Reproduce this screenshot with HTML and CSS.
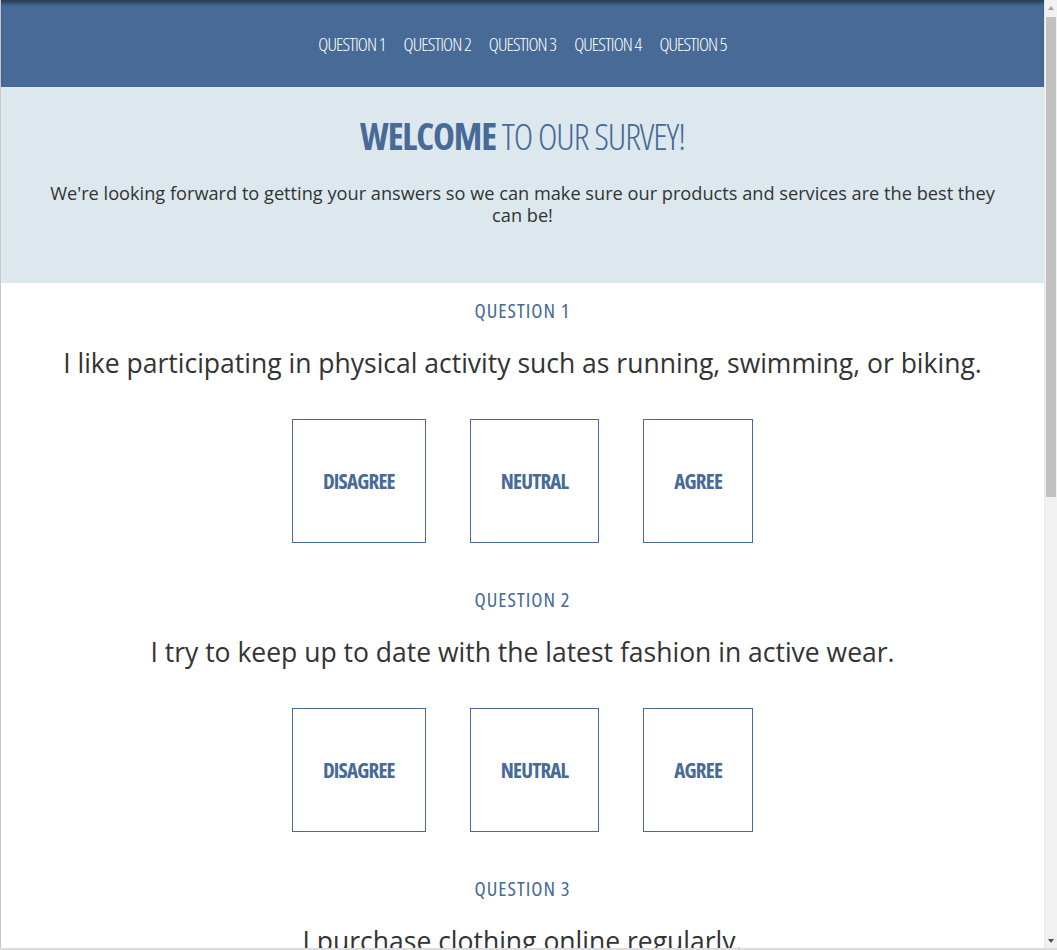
FILE: index.html
```html
<!DOCTYPE html>
<html lang="en">
<head>
<meta charset="utf-8">
<title>Survey</title>
<link rel="stylesheet" href="styles.css">
</head>
<body>
<div class="window">
  <div class="frame">
    <div class="viewport">
      <nav class="nav">
        <a href="#q1">QUESTION 1</a>
        <a href="#q2">QUESTION 2</a>
        <a href="#q3">QUESTION 3</a>
        <a href="#q4">QUESTION 4</a>
        <a href="#q5">QUESTION 5</a>
      </nav>
      <header class="hero">
        <h1><strong>WELCOME</strong> TO OUR SURVEY!</h1>
        <p>We're looking forward to getting your answers so we can make sure our products and services are the best they can be!</p>
      </header>
      <section class="question" id="q1">
        <h2>QUESTION 1</h2>
        <h3>I like participating in physical activity such as running, swimming, or biking.</h3>
        <div class="answers">
          <div class="answer">DISAGREE</div>
          <div class="answer">NEUTRAL</div>
          <div class="answer">AGREE</div>
        </div>
      </section>
      <section class="question" id="q2">
        <h2>QUESTION 2</h2>
        <h3>I try to keep up to date with the latest fashion in active wear.</h3>
        <div class="answers">
          <div class="answer">DISAGREE</div>
          <div class="answer">NEUTRAL</div>
          <div class="answer">AGREE</div>
        </div>
      </section>
      <section class="question" id="q3">
        <h2>QUESTION 3</h2>
        <h3>I purchase clothing online regularly.</h3>
        <div class="answers">
          <div class="answer">DISAGREE</div>
          <div class="answer">NEUTRAL</div>
          <div class="answer">AGREE</div>
        </div>
      </section>
    </div>
    <div class="scrollbar">
      <div class="arrow up"></div>
      <div class="track"><div class="thumb"></div></div>
      <div class="arrow down"></div>
    </div>
  </div>
</div>
</body>
</html>
```
FILE: styles.css
```css
html, body {
  margin: 0;
  padding: 0;
  background: #fff;
}
.window {
  width: 1057px;
  height: 950px;
  overflow: hidden;
  display: flex;
  flex-direction: column;
  border-bottom: 2px solid #dcdcdc;
  box-sizing: border-box;
}
.frame {
  flex: 1;
  display: flex;
  min-height: 0;
}
.viewport {
  flex: 1;
  overflow: hidden;
  border-left: 1px solid #c8c8c8;
  font-family: "Open Sans", sans-serif;
  color: #333;
}
.nav {
  background: #476a96;
  border-top: 2px solid #2c415c;
  box-shadow: inset 0 3px 3px -1px rgba(20, 35, 55, 0.45);
  box-sizing: border-box;
  height: 87px;
  display: flex;
  justify-content: center;
  align-items: center;
  gap: 18px;
  padding-bottom: 2px;
}
.nav a {
  color: #fff;
  text-decoration: none;
  font-family: "Open Sans", sans-serif;
  font-stretch: 75%;
  font-weight: 300;
  font-size: 19px;
  letter-spacing: -0.9px;
}
.hero {
  background: #dce8ee;
  height: 196px;
  padding: 27px 40px 0;
  box-sizing: border-box;
  text-align: center;
}
.hero h1 {
  margin: 0;
  font-family: "Open Sans", sans-serif;
  font-stretch: 75%;
  font-weight: 300;
  font-size: 37px;
  letter-spacing: -1.1px;
  color: #476a96;
  line-height: 44px;
}
.hero h1 strong {
  font-weight: 700;
}
.hero p {
  margin: 24px 0 0;
  font-size: 18.2px;
  line-height: 22px;
  color: #333;
}
.question {
  text-align: center;
  padding-top: 15px;
  height: 289px;
  box-sizing: border-box;
}
.question h2 {
  margin: 0;
  font-family: "Open Sans", sans-serif;
  font-stretch: 75%;
  font-weight: 400;
  font-size: 20.5px;
  letter-spacing: 1px;
  color: #476a96;
  line-height: 24px;
}
.question h3 {
  margin: 24px 0 0;
  font-weight: 400;
  font-size: 26.5px;
  line-height: 34px;
  color: #333;
}
.answers {
  margin-top: 39px;
  display: flex;
  justify-content: center;
  gap: 44px;
}
.answer {
  border: 1px solid #476a96;
  padding: 51px 30px;
  line-height: 20px;
  font-family: "Open Sans", sans-serif;
  font-stretch: 75%;
  font-weight: 700;
  font-size: 21px;
  letter-spacing: -0.8px;
  color: #476a96;
}
.scrollbar {
  width: 12px;
  background: #f1f1f1;
  display: flex;
  flex-direction: column;
  border-left: 1px solid #e8e8e8;
}
.arrow {
  height: 15px;
  display: flex;
  align-items: center;
  justify-content: center;
}
.arrow::before {
  content: "";
  border-left: 3px solid transparent;
  border-right: 3px solid transparent;
}
.arrow.up::before {
  border-bottom: 4px solid #a3a3a3;
}
.arrow.down::before {
  border-top: 4px solid #505050;
}
.track {
  flex: 1;
  padding: 2px 1px 0;
}
.thumb {
  height: 480px;
  background: #c1c1c1;
}
```
